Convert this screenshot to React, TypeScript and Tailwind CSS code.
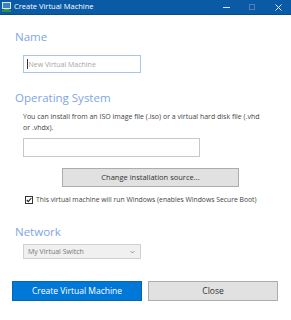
import React from "react";

const font = { fontFamily: '"Open Sans", "Noto Sans", Arial, sans-serif' };

export default function App() {
  return (
    <div className="w-[291px] h-[320px] bg-white overflow-hidden relative" style={font}>
      {/* Title bar */}
      <div className="h-[15px] bg-[#0b5aa6] flex items-center border-b border-[#084a8a]">
        <div className="ml-[2px] w-[10px] h-[10px] relative">
          <svg width="10" height="10" viewBox="0 0 10 10">
            <rect x="0" y="0" width="9" height="7" fill="#d8e6f3" />
            <rect x="1" y="1" width="7" height="5" fill="#3d82c6" />
            <rect x="2" y="7" width="5" height="3" fill="#3fae49" />
            <rect x="0" y="8" width="9" height="2" fill="#2f8f3a" />
          </svg>
        </div>
        <span className="ml-[2px] text-[7.5px] leading-none text-white">Create Virtual Machine</span>
        <div className="ml-auto flex items-center h-full">
          <div className="w-[26px] flex justify-center items-center">
            <div className="w-[7px] h-[1px] bg-[#dbe6f2]" />
          </div>
          <div className="w-[26px] flex justify-center items-center">
            <div className="w-[6px] h-[6px] border border-[#4f7fb8]" />
          </div>
          <div className="w-[26px] flex justify-center items-center">
            <svg width="7" height="7" viewBox="0 0 7 7">
              <path d="M0.5 0.5 L6.5 6.5 M6.5 0.5 L0.5 6.5" stroke="#e6eef7" strokeWidth="1" />
            </svg>
          </div>
        </div>
      </div>

      {/* Body */}
      <div className="flex flex-col">
        <div className="pl-[15px] pt-[14px] text-[11.5px] leading-[16px] text-[#7ea6e4]">Name</div>
        <div className="pl-[23px] pt-[10px]">
          <div className="w-[118px] h-[18px] border border-[#a9c5ef] flex items-center pl-[3px]">
            <div className="w-[1px] h-[10px] bg-[#333]" />
            <span className="text-[7px] text-[#a5a5a5] leading-none ml-[0.5px]">New Virtual Machine</span>
          </div>
        </div>

        <div className="pl-[15px] pt-[17px] text-[11.5px] leading-[16px] text-[#7ea6e4]">Operating System</div>
        <div className="pl-[23px] pt-[5px] pr-[30px] text-[7px] leading-[11px] text-[#444]">
          You can install from an ISO image file (.iso) or a virtual hard disk file (.vhd or .vhdx).
        </div>
        <div className="pl-[23px] pt-[5px]">
          <div className="w-[177px] h-[19px] border border-[#c8c8c8]" />
        </div>
        <div className="pl-[62px] pt-[11px]">
          <div className="w-[177px] h-[19px] border border-[#acacac] bg-[#e1e1e1] flex items-center justify-center text-[7.5px] text-[#333]">
            Change installation source...
          </div>
        </div>
        <div className="pl-[25px] pt-[9px] flex items-center">
          <div className="w-[8px] h-[8px] border border-[#333] bg-white flex items-center justify-center">
            <svg width="6" height="6" viewBox="0 0 6 6">
              <path d="M0.8 3 L2.3 4.6 L5.3 1" stroke="#222" strokeWidth="1.1" fill="none" />
            </svg>
          </div>
          <span className="ml-[3px] text-[6.8px] leading-none text-[#444]">
            This virtual machine will run Windows (enables Windows Secure Boot)
          </span>
        </div>

        <div className="pl-[15px] pt-[20px] text-[11.5px] leading-[16px] text-[#7ea6e4]">Network</div>
        <div className="pl-[23px] pt-[4px]">
          <div className="w-[118px] h-[15px] border border-[#d0d0d0] bg-[#f0f0f0] flex items-center pl-[4px] pr-[5px]">
            <span className="text-[7px] text-[#777] leading-none">My Virtual Switch</span>
            <svg className="ml-auto" width="5" height="4" viewBox="0 0 5 4">
              <path d="M0.5 1 L2.5 3 L4.5 1" stroke="#888" strokeWidth="0.8" fill="none" />
            </svg>
          </div>
        </div>

        <div className="pl-[12px] pt-[22px] flex gap-[6px]">
          <div className="w-[130px] h-[20px] bg-[#0078d7] border border-[#0a64b4] flex items-center justify-center text-[8.5px] text-white">
            Create Virtual Machine
          </div>
          <div className="w-[130px] h-[20px] bg-[#e1e1e1] border border-[#adadad] flex items-center justify-center text-[8.5px] text-[#333]">
            Close
          </div>
        </div>
      </div>
    </div>
  );
}
